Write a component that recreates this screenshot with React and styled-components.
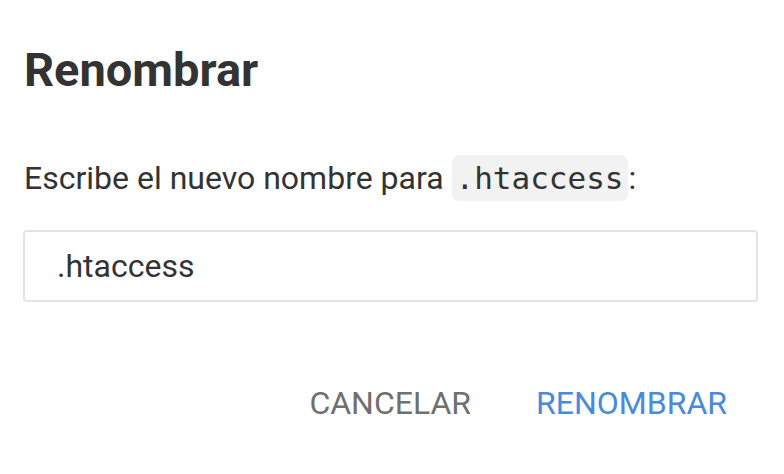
import React from 'react';
import styled, {createGlobalStyle} from 'styled-components';

const GlobalStyle = createGlobalStyle`
  html, body {
    margin: 0;
    padding: 0;
    background: #ffffff;
  }
  body {
    font-family: Roboto, "Noto Sans", sans-serif;
  }
`;

const Dialog = styled.div`
  width: 784px;
  height: 474px;
  box-sizing: border-box;
  padding: 40px 26px 0 23px;
  display: flex;
  flex-direction: column;
`;

const Title = styled.h2`
  margin: 0 0 0 1px;
  font-size: 47px;
  font-weight: 700;
  line-height: 60px;
  color: #333333;
`;

const Message = styled.p`
  margin: 56px 0 0 1px;
  font-size: 32px;
  line-height: 44px;
  color: #333333;
`;

const Code = styled.code`
  font-family: "DejaVu Sans Mono", "Liberation Mono", monospace;
  font-size: 31px;
  background: #f2f2f2;
  border-radius: 7px;
  padding: 5px 4px;
  margin: 0 1px 0 0;
`;

const NameInput = styled.input`
  margin-top: 30px;
  width: 100%;
  height: 72px;
  box-sizing: border-box;
  border: 2px solid #e4e4e4;
  border-radius: 4px;
  padding: 0 32px;
  font-family: Roboto, sans-serif;
  font-size: 32px;
  color: #333333;
  outline: none;
`;

const Actions = styled.div`
  margin-top: 81px;
  display: flex;
  justify-content: flex-end;
  gap: 65px;
  padding-right: 31px;
`;

const TextButton = styled.button`
  background: none;
  border: none;
  padding: 0;
  font-family: Roboto, sans-serif;
  font-size: 32px;
  line-height: 40px;
  text-transform: uppercase;
  color: ${p => (p.primary ? '#4a8ade' : '#707070')};
  cursor: pointer;
`;

export default function App() {
  return (
    <>
      <GlobalStyle />
      <Dialog>
        <Title>Renombrar</Title>
        <Message>
          Escribe el nuevo nombre para <Code>.htaccess</Code>:
        </Message>
        <NameInput defaultValue=".htaccess" />
        <Actions>
          <TextButton>Cancelar</TextButton>
          <TextButton primary>Renombrar</TextButton>
        </Actions>
      </Dialog>
    </>
  );
}
